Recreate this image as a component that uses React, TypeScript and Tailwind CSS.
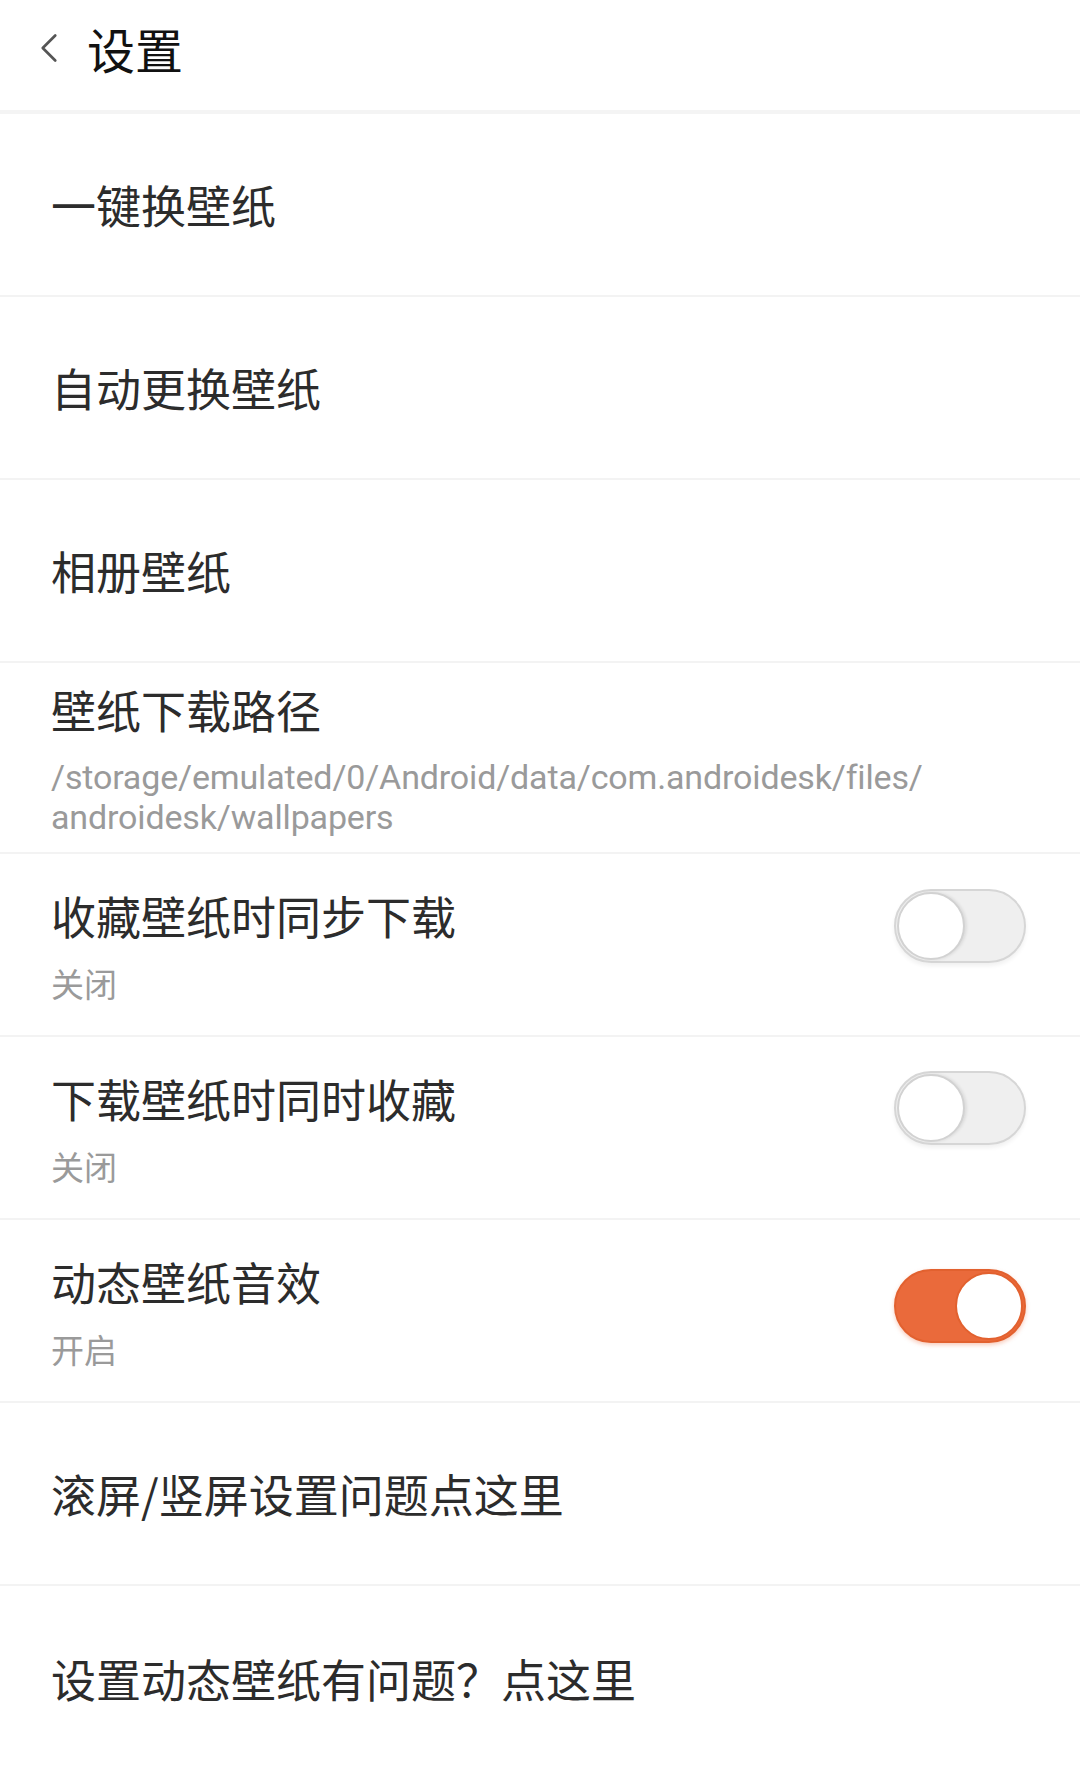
import { ChevronLeft } from "lucide-react";

const cjk = "font-['Noto_Sans_CJK_SC','Noto_Sans',sans-serif]";

function Toggle({ on, className }: { on: boolean; className?: string }) {
  return (
    <div
      className={
        "relative w-[132px] h-[74px] rounded-full shrink-0 " +
        (on
          ? "bg-[#ea6a3b] border-2 border-[#e2612f] shadow-[0_2px_4px_rgba(234,106,59,0.35)] "
          : "bg-[#efefef] border-2 border-[#d6d6d6] shadow-[0_3px_4px_rgba(0,0,0,0.06)] ") +
        (className ?? "")
      }
    >
      <div
        className={
          "absolute top-[1px] w-[68px] h-[68px] rounded-full bg-white " +
          (on
            ? "right-[1px] border-2 border-[#e2612f]"
            : "left-[1px] border-2 border-[#d2d2d2] shadow-[2px_0_3px_rgba(0,0,0,0.08)]")
        }
      />
    </div>
  );
}

function PlainRow({ title }: { title: string }) {
  return (
    <div className="h-[183px] flex items-center pl-[51px] border-b-2 border-[#f3f3f3]">
      <span className="text-[45px] leading-[56px] text-[#2c2c2c]">{title}</span>
    </div>
  );
}

function SwitchRow({ title, sub, on, toggleTop }: { title: string; sub: string; on: boolean; toggleTop: string }) {
  return (
    <div className="h-[183px] flex items-start justify-between pl-[51px] pr-[54px] border-b-2 border-[#f3f3f3]">
      <div className="flex flex-col pt-[34px]">
        <span className="text-[45px] leading-[56px] text-[#2c2c2c]">{title}</span>
        <span className="mt-[17px] text-[33px] leading-[44px] text-[#9a9a9a]">{sub}</span>
      </div>
      <Toggle on={on} className={toggleTop} />
    </div>
  );
}

export default function App() {
  return (
    <div className={"w-[1080px] h-[1792px] bg-white overflow-hidden " + cjk}>
      {/* Header */}
      <div className="h-[114px] flex items-center border-b-4 border-[#f4f4f4] pb-[4px]">
        <ChevronLeft size={50} strokeWidth={1.3} className="ml-[24px] text-[#555] -mt-[10px]" />
        <span className="ml-[13px] text-[48px] leading-none text-[#111] -mt-[10px]">设置</span>
      </div>

      <PlainRow title="一键换壁纸" />
      <PlainRow title="自动更换壁纸" />
      <PlainRow title="相册壁纸" />

      {/* download path */}
      <div className="h-[191px] pl-[51px] pr-[40px] pt-[19px] border-b-2 border-[#f3f3f3]">
        <div className="text-[45px] leading-[56px] text-[#2c2c2c]">壁纸下载路径</div>
        <div className="mt-[19px] font-['Roboto',sans-serif] text-[34px] leading-[40px] tracking-[-0.15px] text-[#9a9a9a]">
          /storage/emulated/0/Android/data/com.androidesk/files/
          <br />
          androidesk/wallpapers
        </div>
      </div>

      <SwitchRow title="收藏壁纸时同步下载" sub="关闭" on={false} toggleTop="mt-[35px]" />
      <SwitchRow title="下载壁纸时同时收藏" sub="关闭" on={false} toggleTop="mt-[34px]" />
      <SwitchRow title="动态壁纸音效" sub="开启" on={true} toggleTop="mt-[49px]" />

      <PlainRow title="滚屏/竖屏设置问题点这里" />
      <div className="h-[207px] flex items-center pl-[51px] pb-[22px]">
        <span className="text-[45px] leading-[56px] text-[#2c2c2c]">设置动态壁纸有问题？点这里</span>
      </div>
    </div>
  );
}
